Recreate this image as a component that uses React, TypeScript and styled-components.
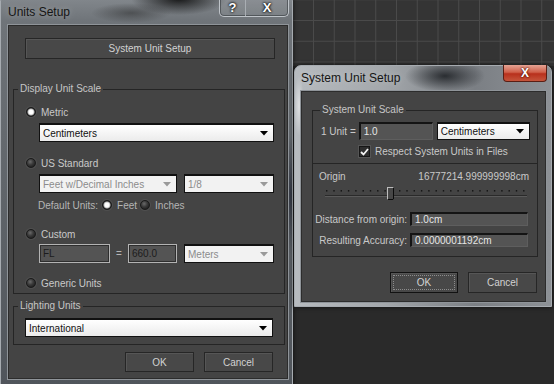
import styled, { createGlobalStyle } from "styled-components";

const GlobalStyle = createGlobalStyle`
  html, body {
    margin: 0;
    padding: 0;
    background: #2a2a2a;
  }
  body {
    font-family: "Liberation Sans", Arial, sans-serif;
    font-size: 10px;
    color: #c9c9c9;
  }
`;

const Desktop = styled.div`
  position: relative;
  width: 554px;
  height: 384px;
  overflow: hidden;
  background: #2a2a2a;
  display: flex;
  flex-direction: column;
`;

const Viewport = styled.div`
  height: 66px;
  margin-left: 292px;
  background-color: #343434;
  background-image: linear-gradient(90deg, #4a4a4a 1px, transparent 1px),
    linear-gradient(180deg, #4a4a4a 1px, transparent 1px);
  background-size: 20.75px 20.75px;
  background-position: 21px 20px;
`;

const Frame = styled.div<{ $x: number; $y: number; $w: number; $h: number; $pad: string; $glass: string }>`
  position: absolute;
  left: ${(p) => p.$x}px;
  top: ${(p) => p.$y}px;
  width: ${(p) => p.$w}px;
  height: ${(p) => p.$h}px;
  box-sizing: border-box;
  display: flex;
  flex-direction: column;
  padding: ${(p) => p.$pad};
  border: 1px solid #a6abb0;
  border-radius: 7px 7px 0 0;
  background: ${(p) => p.$glass};
  box-shadow: 0 0 5px rgba(0, 0, 0, 0.7);
`;

const TitleBar = styled.div<{ $h: number }>`
  height: ${(p) => p.$h}px;
  flex: none;
  display: flex;
  justify-content: space-between;
  align-items: flex-start;
`;

const Title = styled.div<{ $top: number }>`
  margin: ${(p) => p.$top}px 0 0 1px;
  line-height: 14px;
  font-size: 12px;
  color: #151515;
  text-shadow: 0 0 6px rgba(255, 255, 255, 0.35);
`;

const CaptionGroup = styled.div`
  display: flex;
  height: 22px;
  margin-top: -1px;
  border: 1px solid #bfc4c9;
  border-top: none;
  border-radius: 0 0 5px 5px;
  background: rgba(255, 255, 255, 0.07);
  box-shadow: inset 0 0 0 1px rgba(40, 44, 48, 0.5);
`;

const CaptionBtn = styled.div<{ $w: number }>`
  width: ${(p) => p.$w}px;
  box-sizing: border-box;
  padding-top: 5px;
  display: flex;
  align-items: center;
  justify-content: center;
  font-size: 13px;
  line-height: 13px;
  font-weight: bold;
  color: #ffffff;
  text-shadow: 0 0 3px #000, 0 0 2px #000;
  & + & {
    border-left: 1px solid #a9aeb3;
  }
`;

const CloseBtn = styled.div`
  width: 44px;
  height: 17px;
  margin-top: -1px;
  box-sizing: border-box;
  display: flex;
  align-items: center;
  justify-content: center;
  border: 1px solid #5a1e14;
  border-top: none;
  border-radius: 0 0 4px 4px;
  background: linear-gradient(180deg, #e4a394 0%, #d0604a 45%, #b8301c 55%, #c5553c 100%);
  font-size: 12px;
  font-weight: bold;
  color: #ffffff;
  text-shadow: 0 0 2px #5a1008, 0 0 2px #5a1008;
`;

const Client = styled.div`
  flex: 1;
  box-sizing: border-box;
  display: flex;
  flex-direction: column;
  background: #444444;
  border: 1px solid #8f9499;
  box-shadow: inset 0 0 0 1px #2c2c2c;
`;

const Btn = styled.div<{ $w: number; $h: number; $default?: boolean }>`
  box-sizing: border-box;
  width: ${(p) => p.$w}px;
  height: ${(p) => p.$h}px;
  display: flex;
  align-items: center;
  justify-content: center;
  background: #484848;
  border: 1px solid ${(p) => (p.$default ? "#121212" : "#262626")};
  box-shadow: inset 1px 1px 0 #565656;
  color: #d2d2d2;
  outline: ${(p) => (p.$default ? "1px dotted #8c8c8c" : "none")};
  outline-offset: -4px;
`;

const WideBtn = styled(Btn)`
  margin: 13px 0 0 17px;
`;

const Group = styled.div<{ $top: number; $left: number; $w: number; $pb: number; $open?: boolean }>`
  box-sizing: border-box;
  width: ${(p) => p.$w}px;
  margin: ${(p) => p.$top}px 0 0 ${(p) => p.$left}px;
  padding-bottom: ${(p) => p.$pb}px;
  display: flex;
  flex-direction: column;
  align-items: flex-start;
  border: 1px solid #252525;
  border-top: ${(p) => (p.$open ? "none" : "1px solid #252525")};
`;

const Legend = styled.span<{ $left: number }>`
  margin: -7px 0 0 ${(p) => p.$left}px;
  padding: 0 2px;
  line-height: 12px;
  background: #444444;
  color: #c6c6c6;
`;

const Row = styled.div<{ $top: number; $left: number; $h?: number; $gap?: number }>`
  display: flex;
  align-items: center;
  gap: ${(p) => p.$gap ?? 0}px;
  height: ${(p) => p.$h ?? 14}px;
  margin: ${(p) => p.$top}px 0 0 ${(p) => p.$left}px;
  white-space: nowrap;
`;

const SpreadRow = styled(Row)`
  align-self: stretch;
  justify-content: space-between;
  padding-right: 8px;
`;

const ButtonRow = styled.div<{ $top: number; $right: number }>`
  display: flex;
  justify-content: flex-end;
  gap: 10px;
  margin-top: ${(p) => p.$top}px;
  padding-right: ${(p) => p.$right}px;
`;

const Radio = styled.span<{ $on?: boolean }>`
  flex: none;
  box-sizing: border-box;
  width: 10px;
  height: 10px;
  border-radius: 50%;
  border: 1px solid #1b1b1b;
  background: ${(p) =>
    p.$on
      ? "radial-gradient(circle at 50% 50%, #ffffff 0 2px, #bdbdbd 3px, #2a2a2a 4px)"
      : "radial-gradient(circle at 40% 35%, #6a6a6a 0, #3a3a3a 3px, #262626 5px)"};
  box-shadow: 0 0 0 1px #505050;
`;

const Label = styled.span<{ $gap?: number; $dim?: boolean }>`
  margin-left: ${(p) => p.$gap ?? 0}px;
  color: ${(p) => (p.$dim ? "#b5b5b5" : "#c9c9c9")};
`;

const Combo = styled.div<{ $w: number; $h?: number; $off?: boolean }>`
  flex: none;
  box-sizing: border-box;
  width: ${(p) => p.$w}px;
  height: ${(p) => p.$h ?? 19}px;
  display: flex;
  align-items: center;
  justify-content: space-between;
  padding: 0 5px 0 3px;
  border: 1px solid #111111;
  border-top-width: 2px;
  background: ${(p) => (p.$off ? "#f2f2f2" : "linear-gradient(#ffffff, #ebebeb)")};
  color: ${(p) => (p.$off ? "#8c8c8c" : "#111111")};
`;

const Field = styled.div<{ $w: number; $h: number; $off?: boolean }>`
  flex: none;
  box-sizing: border-box;
  width: ${(p) => p.$w}px;
  height: ${(p) => p.$h}px;
  display: flex;
  align-items: center;
  padding-left: 3px;
  background: #545454;
  color: ${(p) => (p.$off ? "#1c1c1c" : "#e6e6e6")};
  border: 1px solid;
  border-color: ${(p) => (p.$off ? "#b3b3b3" : "#141414 #5e5e5e #5e5e5e #141414")};
  border-width: ${(p) => (p.$off ? "1px" : "2px 1px 1px 2px")};
  box-shadow: ${(p) => (p.$off ? "inset 0 0 0 1px #2e2e2e" : "none")};
`;

const Equals = styled.span`
  width: 18px;
  text-align: center;
  color: #b5b5b5;
`;

const Check = styled.span`
  flex: none;
  box-sizing: border-box;
  width: 11px;
  height: 11px;
  display: flex;
  align-items: center;
  justify-content: center;
  background: #2e2e2e;
  border: 1px solid #161616;
  box-shadow: 0 0 0 1px #555555;
`;

const FormLabel = styled.span`
  width: 94px;
  text-align: right;
  margin-right: 3px;
`;

const Slider = styled.svg`
  display: block;
  margin: 4px 0 0 12px;
`;

const Arrow = ({ off }: { off?: boolean }) => (
  <svg width="8" height="5" viewBox="0 0 8 5">
    <path d="M0 0H8L4 4.5Z" fill={off ? "#9a9a9a" : "#000"} />
  </svg>
);

const leftGlass = `
  radial-gradient(ellipse 48px 16px at 178px 4px, rgba(12,12,12,0.9), rgba(12,12,12,0) 100%),
  radial-gradient(ellipse 40px 10px at 130px 18px, rgba(30,30,30,0.45), rgba(30,30,30,0) 100%),
  radial-gradient(ellipse 8px 60px at 290px 200px, rgba(20,24,40,0.6), rgba(20,24,40,0) 100%),
  linear-gradient(180deg, #858a8f 0px, #6f7479 26px, #63686d 160px, #50555b 100%)
`;

const rightGlass = `
  radial-gradient(ellipse 40px 16px at 150px 10px, rgba(25,28,32,0.85), rgba(25,28,32,0) 100%),
  radial-gradient(ellipse 5px 30px at 4px 40px, rgba(255,255,255,0.55), rgba(255,255,255,0) 100%),
  linear-gradient(90deg, #b7bbbf 0px, #a3a7ab 90px, #7b7f84 180px, #8d9196 100%)
`;

const Slide = () => {
  const dots = [];
  for (let i = 0; i < 28; i++) {
    dots.push(<rect key={i} x={i * 7.3 + 1} y={4} width={1.4} height={1.6} fill="#161616" />);
  }
  return (
    <Slider width="202" height="16" viewBox="0 0 202 16">
      {dots}
      <line x1="0" y1="9.5" x2="202" y2="9.5" stroke="#2a2a2a" />
      <line x1="0" y1="10.5" x2="202" y2="10.5" stroke="#5a5a5a" />
      <rect x="62.5" y="1.5" width="6" height="12" fill="#474747" stroke="#bdbdbd" />
      <path d="M62.5 13.5H68.5V1.5" fill="none" stroke="#0c0c0c" />
    </Slider>
  );
};

export default function App() {
  return (
    <Desktop>
      <GlobalStyle />
      <Viewport />

      <Frame $x={0} $y={-6} $w={293} $h={392} $pad="0 3px 5px 6px" $glass={leftGlass}>
        <TitleBar $h={29}>
          <Title $top={10}>Units Setup</Title>
          <CaptionGroup>
            <CaptionBtn $w={25}>?</CaptionBtn>
            <CaptionBtn $w={43}>X</CaptionBtn>
          </CaptionGroup>
        </TitleBar>
        <Client>
          <WideBtn $w={250} $h={21}>System Unit Setup</WideBtn>

          <Group $top={30} $left={5} $w={272} $pb={3}>
            <Legend $left={4}>Display Unit Scale</Legend>
            <Row $top={10} $left={12}>
              <Radio $on />
              <Label $gap={5}>Metric</Label>
            </Row>
            <Row $top={4} $left={25} $h={19}>
              <Combo $w={235}>
                <span>Centimeters</span>
                <Arrow />
              </Combo>
            </Row>
            <Row $top={14} $left={12}>
              <Radio />
              <Label $gap={5}>US Standard</Label>
            </Row>
            <Row $top={4} $left={25} $h={19} $gap={7}>
              <Combo $w={138} $off>
                <span>Feet w/Decimal Inches</span>
                <Arrow off />
              </Combo>
              <Combo $w={90} $off>
                <span>1/8</span>
                <Arrow off />
              </Combo>
            </Row>
            <Row $top={5} $left={24}>
              <Label $dim>Default Units:</Label>
              <Radio $on style={{ marginLeft: 4 }} />
              <Label $dim $gap={5}>Feet</Label>
              <Radio style={{ marginLeft: 3 }} />
              <Label $dim $gap={5}>Inches</Label>
            </Row>
            <Row $top={15} $left={12}>
              <Radio />
              <Label $gap={5}>Custom</Label>
            </Row>
            <Row $top={3} $left={25} $h={19}>
              <Field $w={71} $h={19} $off>FL</Field>
              <Equals>=</Equals>
              <Field $w={49} $h={19} $off>660.0</Field>
              <Combo $w={90} $off style={{ marginLeft: 7 }}>
                <span>Meters</span>
                <Arrow off />
              </Combo>
            </Row>
            <Row $top={13} $left={12}>
              <Radio />
              <Label $gap={5}>Generic Units</Label>
            </Row>
          </Group>

          <Group $top={12} $left={5} $w={272} $pb={7}>
            <Legend $left={4}>Lighting Units</Legend>
            <Row $top={6} $left={11} $h={19}>
              <Combo $w={248}>
                <span>International</span>
                <Arrow />
              </Combo>
            </Row>
          </Group>

          <ButtonRow $top={7} $right={15}>
            <Btn $w={69} $h={20}>OK</Btn>
            <Btn $w={69} $h={20}>Cancel</Btn>
          </ButtonRow>
        </Client>
      </Frame>

      <Frame $x={294} $y={65} $w={258} $h={242} $pad="0 4px 3px 5px" $glass={rightGlass}>
        <TitleBar $h={24}>
          <Title $top={5}>System Unit Setup</Title>
          <CloseBtn>X</CloseBtn>
        </TitleBar>
        <Client>
          <Group $top={19} $left={11} $w={226} $pb={6}>
            <Legend $left={7}>System Unit Scale</Legend>
            <Row $top={6} $left={8} $h={18}>
              <Label>1 Unit =</Label>
              <Field $w={74} $h={18} style={{ marginLeft: 3 }}>1.0</Field>
              <Combo $w={93} $h={18} style={{ marginLeft: 4 }}>
                <span>Centimeters</span>
                <Arrow />
              </Combo>
            </Row>
            <Row $top={6} $left={46} $h={11}>
              <Check>
                <svg width="9" height="8" viewBox="0 0 9 8">
                  <path d="M1 4L3.5 6.5L8 1" fill="none" stroke="#f2f2f2" strokeWidth="1.8" />
                </svg>
              </Check>
              <Label $gap={5}>Respect System Units in Files</Label>
            </Row>
          </Group>

          <Group $top={0} $left={11} $w={226} $pb={9} $open>
            <SpreadRow $top={6} $left={6} $h={12}>
              <Label>Origin</Label>
              <Label>16777214.999999998cm</Label>
            </SpreadRow>
            <Slide />
            <Row $top={10} $left={0}>
              <FormLabel>Distance from origin:</FormLabel>
              <Field $w={118} $h={14}>1.0cm</Field>
            </Row>
            <Row $top={7} $left={0}>
              <FormLabel>Resulting Accuracy:</FormLabel>
              <Field $w={118} $h={14}>0.0000001192cm</Field>
            </Row>
          </Group>

          <ButtonRow $top={15} $right={9}>
            <Btn $w={68} $h={21} $default>OK</Btn>
            <Btn $w={69} $h={21}>Cancel</Btn>
          </ButtonRow>
        </Client>
      </Frame>
    </Desktop>
  );
}
